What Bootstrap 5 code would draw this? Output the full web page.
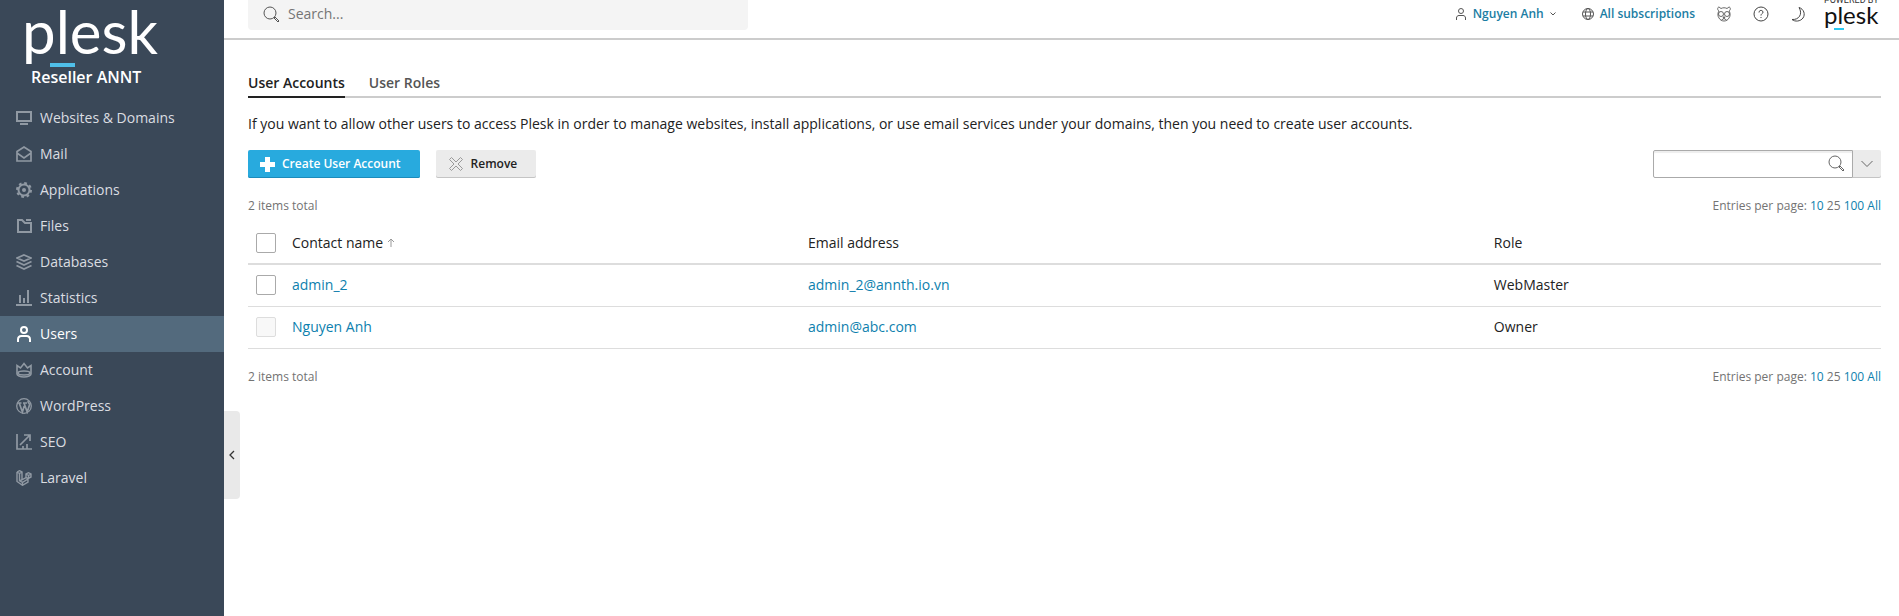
<!DOCTYPE html>
<html lang="en">
<head>
<meta charset="utf-8">
<meta name="viewport" content="width=device-width, initial-scale=1">
<title>User Accounts</title>
<link href="https://cdn.jsdelivr.net/npm/bootstrap@5.3.0/dist/css/bootstrap.min.css" rel="stylesheet">
<style>
body { font-family: "Open Sans", sans-serif; font-size: 14px; line-height: 20px; color: #222; background: #fff; }
a { color: #0d7fae; text-decoration: none; }
a:hover { text-decoration: underline; }
svg { display: block; flex: none; fill: none; stroke: currentColor; }
.sidebar { width: 224px; background: #3a4858; flex: none; }
.brand { height: 100px; padding-left: 22px; color: #fff; }
.brand:hover { text-decoration: none; }
.brand-name { font-family: Lato, sans-serif; font-size: 60px; line-height: 62px; color: #fff; }
.brand-bar { width: 25px; height: 4px; margin-left: 28px; margin-top: 1px; background: #4fbfe8; }
.brand-sub { font-size: 16px; line-height: 20px; font-weight: 600; margin-left: 9px; }
.side-link { height: 36px; padding: 0 16px; gap: 8px; color: #dadde1; }
.side-link svg { color: #9099a3; stroke-width: 2; }
.side-link.active, .side-link.active svg { color: #fff; }
.side-link.active { background: #536a7d; }
.collapse-btn { left: 100%; bottom: 117px; width: 16px; height: 88px; padding: 0; border: 0; border-radius: 0 4px 4px 0; background: #e9e9e9; color: #333; }
.topbar { height: 40px; padding: 0 18px 0 24px; border-bottom: 2px solid #ccc; font-size: 12px; font-weight: 600; }
.topsearch { width: 500px; height: 30px; padding: 0 15px 2px; gap: 8px; background: #f4f4f4; border-radius: 0 0 4px 4px; color: #555; }
.topsearch input { font-size: 14px; line-height: 20px; border: 0; background: none; padding: 0; outline: 0; color: #222; }
.topsearch input::placeholder { color: #757575; }
.tools { height: 28px; gap: 22px; margin-right: 19px; color: #444; }
.tools a { gap: 6px; color: #1b7da3; }
.tools a svg { color: #555; }
.tools a:first-child { margin-right: 4px; }
.tools button { border: 0; background: none; padding: 0; color: inherit; }
.powered { width: 57px; color: #111; }
.powered:hover { text-decoration: none; }
.powered-text { font: 9px/8px Roboto, sans-serif; color: #333; margin-top: -4px; }
.powered-name { font: 24px/22px Lato, sans-serif; }
.powered-bar { width: 10px; height: 2px; margin: 2px 0 0 10px; background: #28c8f0; }
.content { padding: 33px 18px 24px 24px; }
.tabs { border-bottom: 2px solid #ccc; gap: 24px; font-weight: 600; }
.tabs a { padding: 0 0 3px; line-height: 20px; color: #555; border-bottom: 2px solid transparent; margin-bottom: -2px; }
.tabs a.active { color: #222; border-color: #222; }
.act { height: 28px; font-size: 12px; line-height: 16px; font-weight: 600; padding: 0 19px 0 12px; gap: 7px; border: 0; border-radius: 2px; color: #222; background: #ebebeb; box-shadow: inset 0 -1px #c4c4c4; }
.act.create { color: #fff; background: #28aade; box-shadow: inset 0 -1px #1c8bbb; }
.act svg { color: #999; }
.act.create svg { color: #fff; }
.find input { width: 200px; height: 28px; border: 1px solid #aaa; border-radius: 2px 0 0 2px; padding: 0 36px 0 8px; box-shadow: inset 0 2px 1px #eee; }
.find .go { right: 36px; top: 5px; border: 0; background: none; padding: 0; color: #666; }
.find .more { width: 28px; height: 28px; border: 0; padding: 0; background: #ebebeb; box-shadow: inset 0 -1px #c4c4c4; border-radius: 0 2px 2px 0; color: #666; }
.pager { font-size: 12px; line-height: 16px; color: #737373; }
.grid { margin: 0; table-layout: fixed; --bs-table-color: #222; --bs-table-bg: #fff; border-color: #ddd; }
.grid th, .grid td { padding: 10px 8px 11px; height: 42px; font-weight: 400; border-bottom: 1px solid #ddd; vertical-align: middle; }
.grid thead th { border-bottom-width: 2px; padding-bottom: 10px; }
.grid thead svg { color: #999; }
.c-check { width: 36px; }
.c-role { width: 24.2%; }
.c-mail { width: 42%; }
.grid input[type=checkbox] { display: block; width: 20px; height: 20px; margin: 0; border: 1px solid #aaa; border-radius: 2px; }
.grid input[type=checkbox]:disabled { background: #f8f8f8; border-color: #ddd; opacity: 1; }
</style>
</head>
<body>
<div class="d-flex min-vh-100">
  <aside class="sidebar position-relative">
    <a href="#" class="brand d-block">
      <div class="brand-name">plesk</div>
      <div class="brand-bar"></div>
      <div class="brand-sub">Reseller ANNT</div>
    </a>
    <nav class="d-flex flex-column">
      <a href="#" class="side-link d-flex align-items-center"><svg width="16" height="16"><path d="M1 2h14v9H1z"/><path d="M4 14h8"/></svg>Websites &amp; Domains</a>
      <a href="#" class="side-link d-flex align-items-center"><svg width="16" height="16"><path d="M1 5.500 8 1l7 4.500V15H1zM1 7l7 5 7-5" stroke-width="1.700"/></svg>Mail</a>
      <a href="#" class="side-link d-flex align-items-center"><svg width="16" height="16"><circle cx="8" cy="8" r="5.500"/><circle cx="8" cy="8" r="2" fill="currentColor" stroke="none"/><circle cx="8" cy="8" r="7" stroke-dasharray="2.750 2.750"/></svg>Applications</a>
      <a href="#" class="side-link d-flex align-items-center"><svg width="16" height="16"><path d="M2 2h4l3 3h6v9H2zM10 2h5"/></svg>Files</a>
      <a href="#" class="side-link d-flex align-items-center"><svg width="16" height="16"><path d="m8 1 7 3-7 3-7-3zM.5 7.500 8 11l7.500-3.500M.5 11.500 8 15l7.500-3.500" stroke-width="1.800"/></svg>Databases</a>
      <a href="#" class="side-link d-flex align-items-center"><svg width="16" height="16"><path d="M0 15h16M4 5v8M8 8v5M12 0v13"/></svg>Statistics</a>
      <a href="#" class="side-link active d-flex align-items-center" aria-current="page"><svg width="16" height="16"><circle cx="8" cy="4" r="3"/><path d="M2 16v-2.500C2 11 3.500 10 5.500 10h5c2 0 3.500 1 3.500 3.500V16"/></svg>Users</a>
      <a href="#" class="side-link d-flex align-items-center"><svg width="16" height="16"><path d="M1 3.500V12c0 1.500 3 3 7 3s7-1.500 7-3V3.500L11.500 6 8 1.500 4.500 6z" stroke-width="1.600"/><ellipse cx="8" cy="11" rx="6" ry="2" stroke-width="1.600"/></svg>Account</a>
      <a href="#" class="side-link d-flex align-items-center"><svg width="16" height="16"><circle cx="8" cy="8" r="7.300" stroke-width="1.300"/><path d="M1.500 5h4M3.200 5l3.200 9L8.200 8M7 5h4M8 5l3.200 9 2.300-7c.4-1.500-1.800-2-1.300-4" stroke-width="1.700"/></svg>WordPress</a>
      <a href="#" class="side-link d-flex align-items-center"><svg width="16" height="16"><path d="M1 0v15h15M4 11l10-10M8 1h6v6M7 15v-3M11 15v-5" stroke-width="1.700"/></svg>SEO</a>
      <a href="#" class="side-link d-flex align-items-center"><svg width="16" height="16"><path d="m1 2 2.500-1.300L6 2v7.500L3.500 11M1 2v9.500l5.500 3.800 5.500-3.300V8.500l3-1.500V4l-2.500-1.300L10 4v3.500l-6 3.500 2.500 1.400L12 9M1 2l2.500 1.500L6 2M3.500 3.500V11M10 4l2.500 1.500L15 4M12.500 5.500V8M10 7.500l2 1M6.500 12.500v2.500" stroke-width="1.400"/></svg>Laravel</a>
    </nav>
    <button type="button" class="collapse-btn position-absolute d-flex align-items-center justify-content-center" aria-label="Collapse menu"><svg width="6" height="10"><path d="M5 1 1 5l4 4" stroke-width="1.300"/></svg></button>
  </aside>

  <div class="flex-grow-1">
    <header class="topbar d-flex justify-content-between">
      <label class="topsearch d-flex align-items-center">
        <svg width="17" height="17"><circle cx="7" cy="7" r="6"/><path d="m11 12 1-1 4 4-1 1z"/></svg>
        <input type="text" class="flex-grow-1" placeholder="Search..." aria-label="Search">
      </label>
      <div class="d-flex">
        <div class="tools d-flex align-items-center">
          <a href="#" class="d-flex align-items-center"><svg width="12" height="12"><circle cx="6" cy="3" r="2.500"/><path d="M1.500 12v-2c0-1.500 1-2.500 2.500-2.500h4c1.500 0 2.500 1 2.500 2.500v2"/></svg>Nguyen Anh<svg width="6" height="4"><path d="m.5.5 2.500 2.500L5.500.5"/></svg></a>
          <a href="#" class="d-flex align-items-center"><svg width="12" height="12"><circle cx="6" cy="6" r="5.500"/><ellipse cx="6" cy="6" rx="2.500" ry="5.500"/><path d="M1 4h10M1 8h10"/></svg>All subscriptions</a>
          <button type="button" aria-label="Assistant"><svg width="14" height="16"><path d="M2 5C0 4 .5 1 2 1l2 1.500c2-1 4-1 6 0L12 1c1.500 0 2 3 0 4 1.500 2 1.500 5 0 7-2 4-8 4-10 0-1.500-2-1.500-5 0-7z" stroke-width=".8"/><circle cx="4" cy="8" r="2.500" stroke-width=".8"/><circle cx="10" cy="8" r="2.500" stroke-width=".8"/><path d="M6 11h2l-1 1.500zM4.500 14 7 12.500 9.500 14" stroke-width=".8"/></svg></button>
          <button type="button" aria-label="Help"><svg width="16" height="16"><circle cx="8" cy="8" r="7"/><path d="M6 6.500c0-3 4-2.500 4-.3C10 7.500 8 7.500 8 9.500M8 11v1"/></svg></button>
          <button type="button" aria-label="Dark mode"><svg width="14" height="15"><path d="M8 .5c5 1.500 6.500 7 4 10.500-2.500 3.500-8 4-11 1.500C8 13 12 7 8 .5z"/></svg></button>
        </div>
        <a href="#" class="powered"><div class="powered-text text-nowrap">POWERED BY</div><div class="powered-name">plesk</div><div class="powered-bar"></div></a>
      </div>
    </header>

    <main class="content">
      <nav class="tabs d-flex">
        <a href="#" class="active" aria-current="page">User Accounts</a>
        <a href="#">User Roles</a>
      </nav>
      <p class="mt-3 mb-3">If you want to allow other users to access Plesk in order to manage websites, install applications, or use email services under your domains, then you need to create user accounts.</p>
      <div class="d-flex gap-3">
        <button type="button" class="act create d-flex align-items-center"><svg width="15" height="15"><path d="M7.500 0v15M0 7.500h15" stroke-width="5"/></svg>Create User Account</button>
        <button type="button" class="act d-flex align-items-center"><svg width="16" height="16"><path d="M3.500 1.500 8 6l4.500-4.500 2 2L10 8l4.500 4.500-2 2L8 10l-4.500 4.500-2-2L6 8 1.500 3.500z" stroke-linejoin="round"/></svg>Remove</button>
        <form class="find d-flex ms-auto position-relative">
          <input type="text" aria-label="Search users">
          <button type="button" class="go position-absolute" aria-label="Search"><svg width="17" height="17"><circle cx="7" cy="7" r="6"/><path d="m11 12 1-1 4 4-1 1z"/></svg></button>
          <button type="button" class="more d-flex align-items-center justify-content-center" aria-label="More filters"><svg width="12" height="8"><path d="m.5 1 5.500 5.500L11.500 1"/></svg></button>
        </form>
      </div>
      <div class="pager d-flex justify-content-between pt-3 pb-1 my-1">
        <span>2 items total</span>
        <span>Entries per page: <a href="#">10</a> 25 <a href="#">100</a> <a href="#">All</a></span>
      </div>
      <table class="table grid">
        <colgroup><col class="c-check"><col><col class="c-mail"><col class="c-role"></colgroup>
        <thead><tr>
          <th><input type="checkbox" class="form-check-input" aria-label="Select all"></th>
          <th><span class="d-flex align-items-center">Contact name<svg class="ms-1" width="8" height="9"><path d="M4 9V1M1 4l3-3 3 3"/></svg></span></th>
          <th>Email address</th><th>Role</th>
        </tr></thead>
        <tbody>
          <tr><td><input type="checkbox" class="form-check-input" aria-label="Select admin_2"></td><td><a href="#">admin_2</a></td><td><a href="#">admin_2@annth.io.vn</a></td><td>WebMaster</td></tr>
          <tr><td><input type="checkbox" class="form-check-input" aria-label="Select Nguyen Anh" disabled></td><td><a href="#">Nguyen Anh</a></td><td><a href="#">admin@abc.com</a></td><td>Owner</td></tr>
        </tbody>
      </table>
      <div class="pager d-flex justify-content-between pt-3 mt-1">
        <span>2 items total</span>
        <span>Entries per page: <a href="#">10</a> 25 <a href="#">100</a> <a href="#">All</a></span>
      </div>
    </main>
  </div>
</div>
<script src="https://cdn.jsdelivr.net/npm/bootstrap@5.3.0/dist/js/bootstrap.bundle.min.js"></script>
</body>
</html>
